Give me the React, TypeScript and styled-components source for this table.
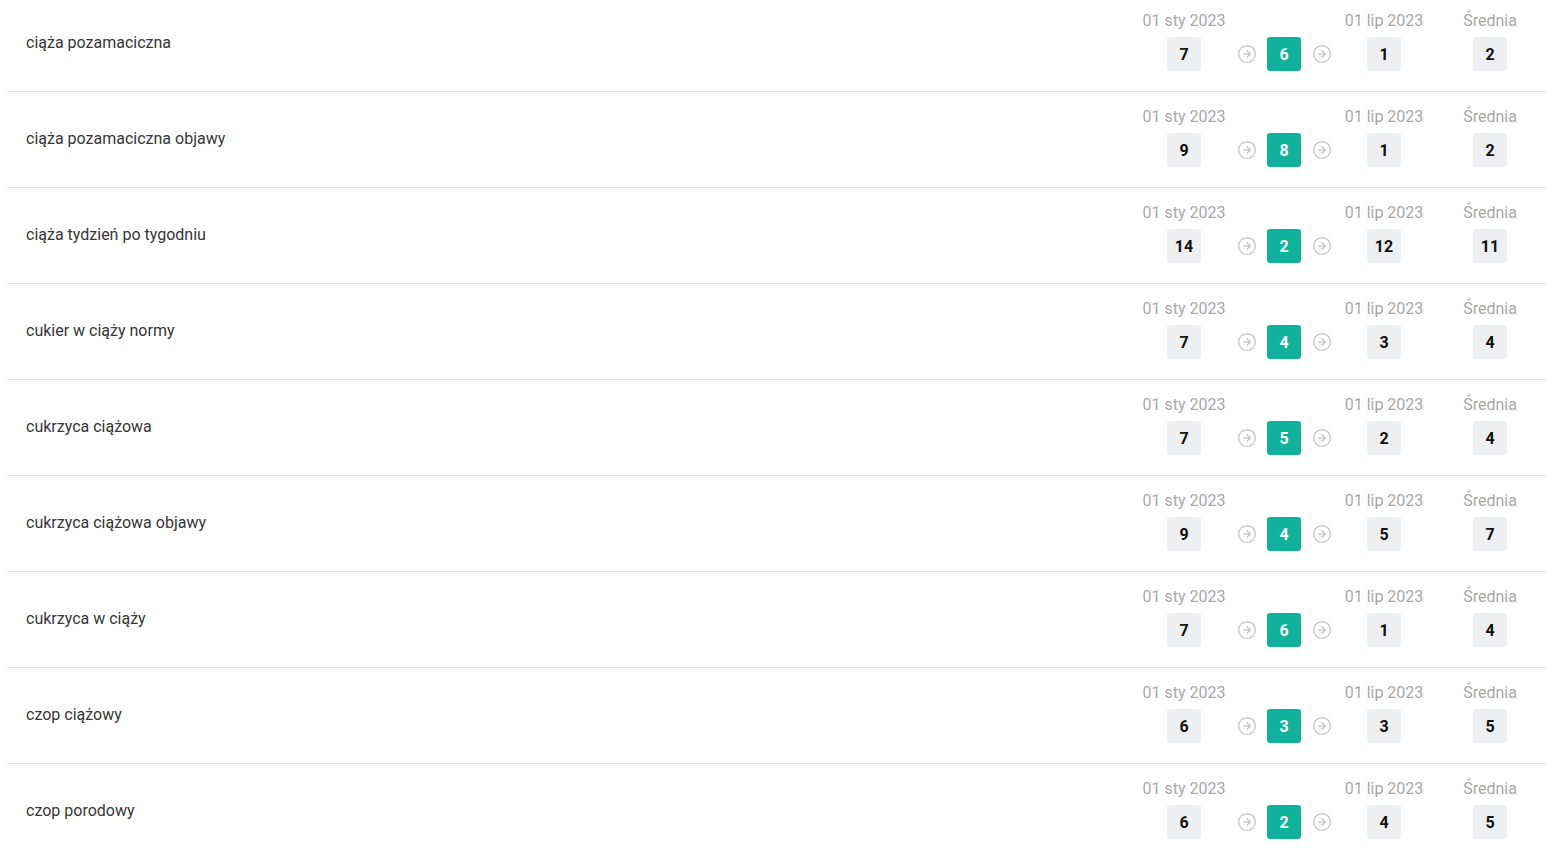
import React from "react";
import styled, { createGlobalStyle } from "styled-components";
import { CircleArrowRight } from "lucide-react";

const GlobalStyle = createGlobalStyle`
  html, body { margin: 0; padding: 0; background: #ffffff; overflow: hidden; }
  body { font-family: Roboto, "Noto Sans", Arial, sans-serif; }
`;

const List = styled.div`
  margin-top: -4px;
  padding-left: 7px;
`;

const Row = styled.div`
  box-sizing: border-box;
  height: 96px;
  display: flex;
  align-items: center;
  justify-content: space-between;
  padding: 15px 15px 20px 0;
  border-bottom: 1px solid #e2e2e2;
`;

const Keyword = styled.div`
  padding-left: 19px;
  padding-top: 2px;
  font-size: 16px;
  line-height: 19px;
  color: #363636;
`;

const Stats = styled.div`
  display: flex;
  align-items: flex-start;
  gap: 12px;
`;

const Col = styled.div<{ $w: number; $ml?: number }>`
  width: ${(p) => p.$w}px;
  margin-left: ${(p) => p.$ml ?? 0}px;
  display: flex;
  flex-direction: column;
  align-items: center;
  gap: 6px;
`;

const Label = styled.div`
  height: 20px;
  font-size: 16px;
  line-height: 20px;
  color: #a8a8a8;
  white-space: nowrap;
`;

const Box = styled.div<{ $accent?: boolean }>`
  width: 34px;
  height: 34px;
  border-radius: 3px;
  display: flex;
  align-items: center;
  justify-content: center;
  font-size: 16px;
  font-weight: 700;
  background: ${(p) => (p.$accent ? "#10b29a" : "#eeeff1")};
  color: ${(p) => (p.$accent ? "#ffffff" : "#111111")};
`;

const ArrowCell = styled.div`
  height: 34px;
  display: flex;
  align-items: center;
  justify-content: center;
  color: #c8c8c8;
`;

type Item = { name: string; a: number; b: number; c: number; d: number };

const items: Item[] = [
  { name: "ciąża pozamaciczna", a: 7, b: 6, c: 1, d: 2 },
  { name: "ciąża pozamaciczna objawy", a: 9, b: 8, c: 1, d: 2 },
  { name: "ciąża tydzień po tygodniu", a: 14, b: 2, c: 12, d: 11 },
  { name: "cukier w ciąży normy", a: 7, b: 4, c: 3, d: 4 },
  { name: "cukrzyca ciążowa", a: 7, b: 5, c: 2, d: 4 },
  { name: "cukrzyca ciążowa objawy", a: 9, b: 4, c: 5, d: 7 },
  { name: "cukrzyca w ciąży", a: 7, b: 6, c: 1, d: 4 },
  { name: "czop ciążowy", a: 6, b: 3, c: 3, d: 5 },
  { name: "czop porodowy", a: 6, b: 2, c: 4, d: 5 },
];

const Arrow = () => (
  <Col $w={17}>
    <Label />
    <ArrowCell>
      <CircleArrowRight size={20} strokeWidth={1.7} />
    </ArrowCell>
  </Col>
);

export default function App() {
  return (
    <>
      <GlobalStyle />
      <List>
        {items.map((it) => (
          <Row key={it.name}>
            <Keyword>{it.name}</Keyword>
            <Stats>
              <Col $w={84}>
                <Label>01 sty 2023</Label>
                <Box>{it.a}</Box>
              </Col>
              <Arrow />
              <Col $w={34}>
                <Label />
                <Box $accent>{it.b}</Box>
              </Col>
              <Arrow />
              <Col $w={84}>
                <Label>01 lip 2023</Label>
                <Box>{it.c}</Box>
              </Col>
              <Col $w={84} $ml={10}>
                <Label>Średnia</Label>
                <Box>{it.d}</Box>
              </Col>
            </Stats>
          </Row>
        ))}
      </List>
    </>
  );
}
